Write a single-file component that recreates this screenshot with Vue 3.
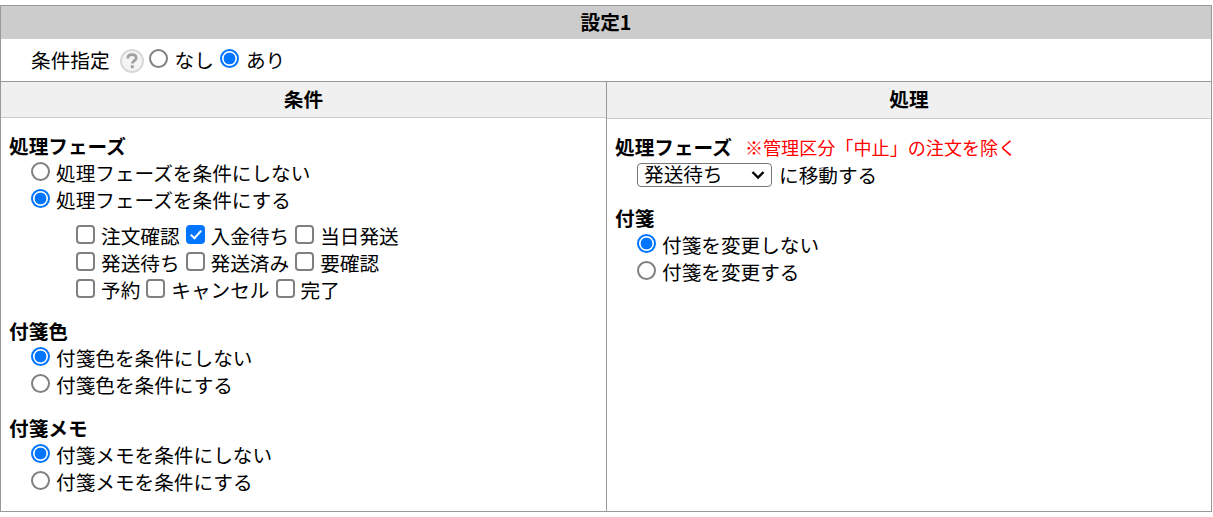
<script setup>
const phases = [
  [{ t: '注文確認' }, { t: '入金待ち', c: true }, { t: '当日発送' }],
  [{ t: '発送待ち' }, { t: '発送済み' }, { t: '要確認' }],
  [{ t: '予約' }, { t: 'キャンセル' }, { t: '完了' }],
]
const groups = [
  { h: '付箋色', n: 'color', a: '付箋色を条件にしない', b: '付箋色を条件にする' },
  { h: '付箋メモ', n: 'memo', a: '付箋メモを条件にしない', b: '付箋メモを条件にする' },
]
</script>

<template>
  <div class="page">
    <div class="frame">
      <div class="title">設定1</div>
      <div class="spec">
        <span>条件指定</span>
        <svg class="help" viewBox="0 0 24 24" width="24" height="24">
          <circle cx="12" cy="12" r="11" fill="#f4f4f4" stroke="#d9d9d9" stroke-width="2" />
          <path d="M7.8 9.4c0-2.4 1.8-3.8 4.2-3.8s4.2 1.3 4.2 3.4c0 2.8-3.8 2.8-3.8 5.4" fill="none" stroke="#a0a0a0" stroke-width="2.8" />
          <rect x="10.8" y="16.2" width="3" height="3" fill="#a0a0a0" />
        </svg>
        <label class="opt"><input type="radio" name="spec" /><span>なし</span></label>
        <label class="opt"><input type="radio" name="spec" checked /><span>あり</span></label>
      </div>
      <div class="cols">
        <div class="col left">
          <div class="col-head">条件</div>
          <div class="col-body">
            <section class="group">
              <h3>処理フェーズ</h3>
              <label class="row"><input type="radio" name="phase" /><span>処理フェーズを条件にしない</span></label>
              <label class="row"><input type="radio" name="phase" checked /><span>処理フェーズを条件にする</span></label>
              <div class="checks">
                <div v-for="(r, i) in phases" :key="i" class="check-row">
                  <label v-for="p in r" :key="p.t" class="check"><input type="checkbox" :checked="p.c" /><span>{{ p.t }}</span></label>
                </div>
              </div>
            </section>
            <section v-for="g in groups" :key="g.n" class="group">
              <h3>{{ g.h }}</h3>
              <label class="row"><input type="radio" :name="g.n" checked /><span>{{ g.a }}</span></label>
              <label class="row"><input type="radio" :name="g.n" /><span>{{ g.b }}</span></label>
            </section>
          </div>
        </div>
        <div class="col right">
          <div class="col-head">処理</div>
          <div class="col-body">
            <section class="group">
              <h3>処理フェーズ<span class="note">※管理区分「中止」の注文を除く</span></h3>
              <div class="move">
                <select>
                  <option>発送待ち</option>
                </select>
                <span>に移動する</span>
              </div>
            </section>
            <section class="group">
              <h3>付箋</h3>
              <label class="row"><input type="radio" name="tag" checked /><span>付箋を変更しない</span></label>
              <label class="row"><input type="radio" name="tag" /><span>付箋を変更する</span></label>
            </section>
          </div>
        </div>
      </div>
    </div>
  </div>
</template>

<style>
html, body { margin: 0; background: #fff; }
</style>

<style scoped>
.page {
  width: 1213px;
  height: 517px;
  padding-top: 5px;
  box-sizing: border-box;
  font-family: "Noto Sans CJK JP", "Noto Sans", sans-serif;
  font-size: 19.65px;
  line-height: 27px;
  color: #000;
  overflow: hidden;
}
.frame {
  width: 1212px;
  height: 507px;
  box-sizing: border-box;
  border: 1px solid #999;
  display: flex;
  flex-direction: column;
}
.title {
  height: 33px;
  background: #ccc;
  font-weight: 700;
  text-align: center;
  line-height: 31px;
}
.spec {
  height: 43px;
  box-sizing: border-box;
  border-bottom: 1px solid #999;
  padding: 0 0 2px 30px;
  display: flex;
  align-items: center;
}
.help { margin: 3px 5px 0 10px; }
.opt { display: flex; align-items: center; margin-right: 6px; }
.opt input { margin: 0 7px 2px 0; }
.cols { flex: 1; display: flex; min-height: 0; }
.col { display: flex; flex-direction: column; }
.left { width: 605px; border-right: 1px solid #999; }
.right { flex: 1; }
.col-head {
  height: 37px;
  box-sizing: border-box;
  background: #f0f0f0;
  border-bottom: 1px solid #ccc;
  font-weight: 700;
  text-align: center;
  line-height: 33px;
}
.col-body { padding: 14px 8px 0; }
.group { margin-bottom: 16px; }
h3 {
  margin: 0;
  font-size: inherit;
  font-weight: 700;
  line-height: 27px;
}
.note {
  font-weight: 400;
  font-size: 18.1px;
  color: #f00;
  margin-left: 13px;
}
.row { display: flex; align-items: center; height: 27px; padding-left: 22px; }
input[type="radio"], input[type="checkbox"] {
  appearance: none;
  box-sizing: border-box;
  width: 19px;
  height: 19px;
  flex: none;
  background: #fff;
  border: 2px solid #808080;
  position: relative;
}
input[type="radio"] { border-radius: 50%; }
input[type="radio"]:checked {
  border-color: #0075ff;
  background: radial-gradient(circle, #0075ff 0 5.6px, #fff 6.2px);
}
input[type="checkbox"] { border-radius: 4px; }
input[type="checkbox"]:checked {
  background: #0075ff;
  border-color: #0075ff;
}
input[type="checkbox"]:checked::after {
  content: "";
  position: absolute;
  left: 5px;
  top: 1px;
  width: 4px;
  height: 9px;
  border: solid #fff;
  border-width: 0 2.5px 2.5px 0;
  transform: rotate(42deg);
}
.row input { margin: 0 6px 2px 0; }
.checks { padding: 9px 0 0 67px; margin-bottom: -2px; }
.check-row { display: flex; height: 27px; align-items: center; }
.check { display: flex; align-items: center; margin-right: 6px; }
.check input { margin: 0 6px 2px 0; }
.move { display: flex; align-items: center; height: 27px; padding-left: 22px; }
select {
  appearance: none;
  box-sizing: border-box;
  width: 135px;
  height: 24px;
  margin-right: 7px;
  font-family: "Liberation Sans", "Noto Sans CJK JP", sans-serif;
  font-size: 19.65px;
  background: #fff;
  color: #000;
  border: 1px solid #767676;
  border-radius: 4px;
  padding: 0 0 0 6px;
  background-image: url("data:image/svg+xml,%3Csvg xmlns='http://www.w3.org/2000/svg' width='14' height='10'%3E%3Cpath d='M1.5 2l5.5 5.5L12.5 2' fill='none' stroke='%23000' stroke-width='2.4'/%3E%3C/svg%3E");
  background-repeat: no-repeat;
  background-position: right 6px center;
}
</style>
